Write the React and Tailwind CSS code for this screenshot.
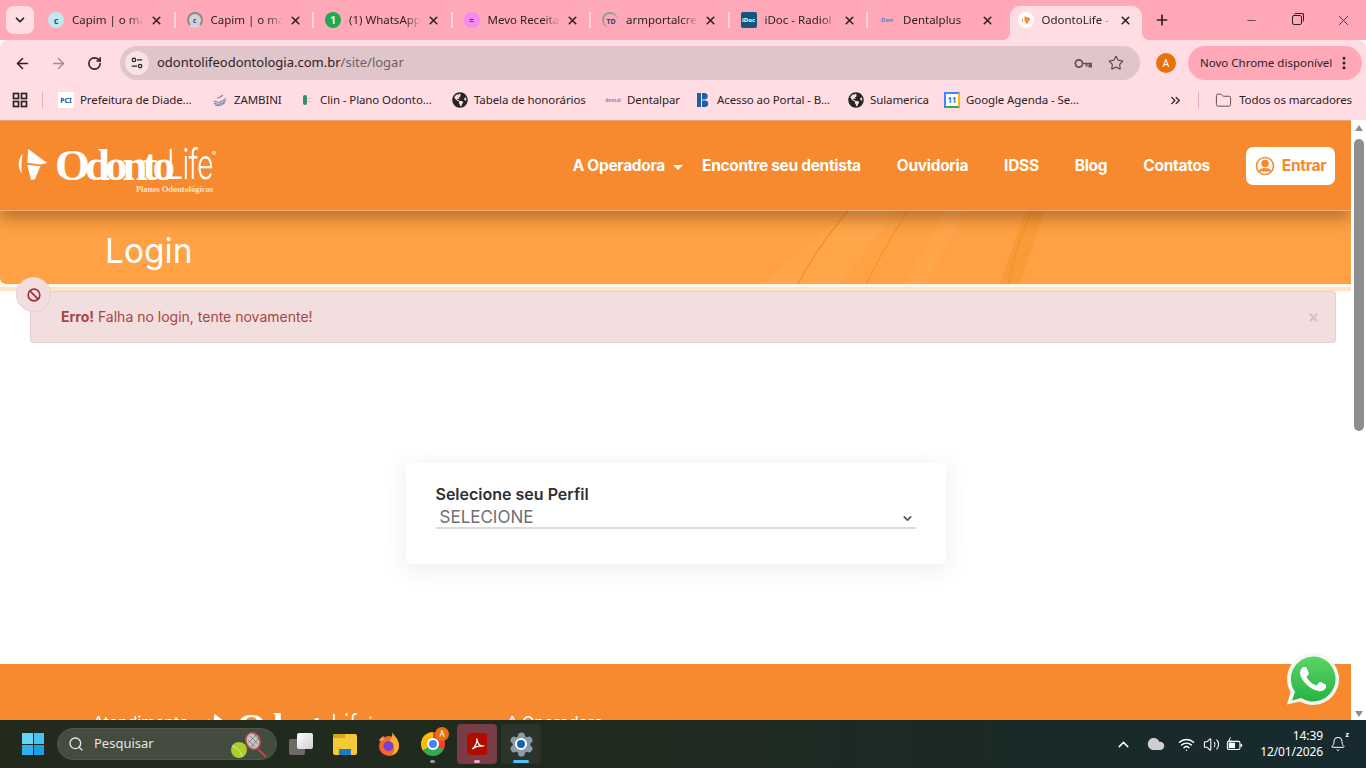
import { ArrowLeft, ArrowRight, RotateCw, Star, Folder, X, Plus, Minus, ChevronDown, ChevronUp, ChevronsRight, EllipsisVertical, Search, Wifi, Volume2, Cloud, Ban, Bell, Settings } from "lucide-react";
import { FaGlobeAmericas } from "react-icons/fa";

const uiFont = "font-['Noto_Sans',sans-serif]";

// favicons are tiny, so each one is only a rough drawing
const CapimIcon = () => (
  <div className="w-4 h-4 rounded-full bg-[#bfe9ee] flex items-center justify-center text-[9px] font-bold text-[#1c5a8a] leading-none">c</div>
);
const CapimLoadingIcon = () => (
  <div className="w-4 h-4 rounded-full border-2 border-[#8f8a8d] border-b-transparent flex items-center justify-center text-[7px] font-bold text-[#1c5a8a] leading-none bg-[#bfe9ee]/60">c</div>
);
const WhatsIcon = () => (
  <div className="w-4 h-4 rounded-full bg-[#1faa50] flex items-center justify-center text-[10px] font-bold text-white leading-none">1</div>
);
const MevoIcon = () => (
  <div className="w-4 h-4 rounded-full bg-[#f68af0] flex items-center justify-center text-[8px] font-bold text-[#6b1a55] leading-none">≈</div>
);
const TdIcon = () => (
  <div className="w-4 h-4 rounded-full border-l-2 border-t-2 border-[#9a9a9e] flex items-center justify-center text-[7px] font-bold text-[#2c4a6e] leading-none">TD</div>
);
const IdocIcon = () => (
  <div className="w-4 h-4 rounded-[2px] bg-[#12567f] flex items-center justify-center text-[6px] font-bold text-white leading-none">iDoc</div>
);
const DentalIcon = () => (
  <div className="w-4 h-4 flex items-center justify-center text-[6px] font-bold text-[#5b7fc0] leading-none">Den</div>
);
const OdontoIcon = () => (
  <div className="w-4 h-4 rounded-full bg-white flex items-center justify-center">
    <svg viewBox="0 0 16 16" className="w-3 h-3" fill="#f78a2e">
      <path d="M6 3l8 3-5 8-3-6z" />
      <path d="M3.500 5C2 8 2.500 10 4 12c-.3-2.500-.3-4.500-.5-7z" />
    </svg>
  </div>
);

const tabs = [
  { title: "Capim | o maior", icon: <CapimIcon /> },
  { title: "Capim | o maior", icon: <CapimLoadingIcon /> },
  { title: "(1) WhatsApp", icon: <WhatsIcon /> },
  { title: "Mevo Receita", icon: <MevoIcon /> },
  { title: "armportalcred", icon: <TdIcon /> },
  { title: "iDoc - Radiol", icon: <IdocIcon /> },
  { title: "Dentalplus", icon: <DentalIcon /> },
];

const PciIcon = () => (
  <div className="w-4 h-4 bg-white flex items-center justify-center text-[7px] font-bold text-[#1c4f9c] leading-none">PCI</div>
);
const ZambiniIcon = () => (
  <svg viewBox="0 0 16 16" className="w-4 h-4" fill="none" stroke="#7f8ea3" strokeWidth="1.200">
    <path d="M2 9c3 2 8 2 12-3M2 11c3 2 8 2 12-3M3 13c3 1 7 1 10-3M5 6c2 0 4-1 6-3" />
  </svg>
);
const ClinIcon = () => (
  <svg viewBox="0 0 16 16" className="w-4 h-4">
    <rect x="5" y="3" width="4" height="10" rx="2" fill="#2f8f6a" />
    <rect x="10" y="6" width="3" height="1" fill="#c8c8c8" />
    <rect x="10" y="9" width="3" height="1" fill="#c8c8c8" />
  </svg>
);
const GlobeIcon = () => <FaGlobeAmericas size={16} color="#262626" />;
const DentalparIcon = () => (
  <div className="w-4 h-4 flex items-center justify-center text-[5px] font-bold text-[#a87fb0] leading-none">dental</div>
);
const BlueBIcon = () => (
  <svg viewBox="0 0 16 16" className="w-4 h-4" fill="#1f5fa8">
    <rect x="2" y="1" width="4" height="14" />
    <path d="M7 1h3a3.300 3.300 0 010 6.500H7zM7 8.500h3.500a3.300 3.300 0 010 6.500H7z" />
  </svg>
);
const CalendarIcon = () => (
  <div className="w-4 h-4 bg-white border-2 border-[#4285f4] border-b-[#34a853] border-r-[#fbbc04] flex items-center justify-center text-[8px] font-bold text-[#1a73e8] leading-none">11</div>
);

const bookmarks = [
  { label: "Prefeitura de Diade...", icon: <PciIcon />, w: "w-[154px]" },
  { label: "ZAMBINI", icon: <ZambiniIcon />, w: "w-[86px]" },
  { label: "Clin - Plano Odonto...", icon: <ClinIcon />, w: "w-[154px]" },
  { label: "Tabela de honorários", icon: <GlobeIcon />, w: "w-[153px]" },
  { label: "Dentalpar", icon: <DentalparIcon />, w: "w-[90px]" },
  { label: "Acesso ao Portal - B...", icon: <BlueBIcon />, w: "w-[153px]" },
  { label: "Sulamerica", icon: <GlobeIcon />, w: "w-[96px]" },
  { label: "Google Agenda - Se...", icon: <CalendarIcon />, w: "w-[150px]" },
];

const navLinks = ["Encontre seu dentista", "Ouvidoria", "IDSS", "Blog", "Contatos"];

function TabStrip() {
  return (
    <div className={`h-10 bg-[#ffa9b8] flex relative ${uiFont}`}>
      <div className="absolute left-[6px] top-[6px] w-[28px] h-[28px] rounded-lg bg-[#ffdde3] flex items-center justify-center">
        <ChevronDown size={14} strokeWidth={3} color="#222" />
      </div>
      <div className="flex ml-[40px] h-full">
        {tabs.map((tab, i) => (
          <div key={i} className="w-[138.500px] h-10 flex items-center pl-[8px] relative">
            <div className="w-4 h-4 shrink-0">{tab.icon}</div>
            <span className="ml-[8px] w-[72px] overflow-hidden whitespace-nowrap text-[11.500px] text-[#2b2325] [mask-image:linear-gradient(90deg,#000_78%,transparent)]">{tab.title}</span>
            <X size={13} strokeWidth={3} color="#2b2325" className="ml-[6px] shrink-0" />
            {i < tabs.length - 1 && <div className="absolute right-[3px] top-[12px] w-[2px] h-[16px] bg-[#ffd5dc]" />}
          </div>
        ))}
        <div className="w-[132px] h-[34px] mt-[6px] pb-[6px] bg-[#ffdde3] rounded-t-[10px] flex items-center pl-[8px] relative">
          <div className="absolute -left-[8px] bottom-0 w-[8px] h-[8px] bg-[radial-gradient(circle_at_0_0,transparent_8px,#ffdde3_8px)]" />
          <div className="absolute -right-[8px] bottom-0 w-[8px] h-[8px] bg-[radial-gradient(circle_at_100%_0,transparent_8px,#ffdde3_8px)]" />
          <div className="w-4 h-4 shrink-0"><OdontoIcon /></div>
          <span className="ml-[8px] w-[69px] overflow-hidden whitespace-nowrap text-[11.500px] text-[#2b2325] [mask-image:linear-gradient(90deg,#000_85%,transparent)]">OdontoLife - Sistema</span>
          <X size={13} strokeWidth={3} color="#2b2325" className="ml-[8px] shrink-0" />
        </div>
        <Plus size={16} strokeWidth={2.500} color="#2b2325" className="ml-[12px] mt-[12px]" />
      </div>
      <div className="ml-auto flex items-center h-10 text-[#2b2325]">
        <div className="w-[46px] flex justify-center"><Minus size={13} strokeWidth={1.300} /></div>
        <div className="w-[46px] flex justify-center">
          <div className="w-[10px] h-[10px] rounded-[2px] border border-[#2b2325] relative">
            <div className="absolute left-[1px] -top-[3px] w-[10px] h-[9px] rounded-[2px] border-t border-r border-[#2b2325]" />
          </div>
        </div>
        <div className="w-[46px] flex justify-center"><X size={17} strokeWidth={1.100} /></div>
      </div>
    </div>
  );
}

function Toolbar() {
  return (
    <div className={`h-10 pt-[6px] bg-[#ffdde3] rounded-t-[8px] flex items-center relative ${uiFont}`}>
      <ArrowLeft size={17} strokeWidth={2.200} color="#2b2325" className="ml-[14px]" />
      <ArrowRight size={17} strokeWidth={2} color="#a18d92" className="ml-[19px]" />
      <RotateCw size={15} strokeWidth={2.500} color="#2b2325" className="ml-[20px]" />
      <div className="ml-[18px] w-[1020px] h-[34px] rounded-full bg-[#e0c5ca] flex items-center pl-[5px]">
        <div className="w-[24px] h-[24px] rounded-full bg-[#f6e3e6] flex items-center justify-center">
          <svg viewBox="0 0 16 16" className="w-[14px] h-[14px]" fill="none" stroke="#2b2325" strokeWidth="1.400">
            <circle cx="4.500" cy="4.500" r="2" />
            <path d="M8 4.500h6M2 11.500h6" />
            <circle cx="11.500" cy="11.500" r="2" />
          </svg>
        </div>
        <span className="ml-[8px] text-[13px] text-[#2b2325]">
          odontolifeodontologia.com.br<span className="text-[#6d5f63]">/site/logar</span>
        </span>
        <svg viewBox="0 0 20 12" className="ml-auto w-[18px] h-[11px]" fill="none" stroke="#5f5356" strokeWidth="1.900">
          <circle cx="5.500" cy="6" r="4" />
          <path d="M9.500 6H19v3.500h-2V7" />
          <path d="M14 6v3.500" />
        </svg>
        <Star size={16} strokeWidth={1.800} color="#5f5356" className="ml-[16px] mr-[16px]" />
      </div>
      <div className="ml-[16px] w-[20px] h-[20px] rounded-full bg-[#e8710a] flex items-center justify-center text-[10px] text-white">A</div>
      <div className="ml-[12px] w-[174px] h-[34px] rounded-full bg-[#ffa9b8] flex items-center pl-[12px] text-[11.500px] text-[#2b2325] whitespace-nowrap">
        Novo Chrome disponível
        <EllipsisVertical size={16} strokeWidth={2.500} className="ml-auto mr-[10px] shrink-0" />
      </div>
    </div>
  );
}

function BookmarksBar() {
  return (
    <div className={`h-10 bg-[#ffdde3] flex items-center text-[11.500px] tracking-[-0.1px] text-[#2b2325] whitespace-nowrap ${uiFont}`}>
      <svg viewBox="0 0 16 16" className="w-4 h-4 ml-[12px]" fill="none" stroke="#2b2325" strokeWidth="1.700">
        <rect x="1.500" y="1.500" width="5" height="5" />
        <rect x="9.500" y="1.500" width="5" height="5" />
        <rect x="1.500" y="9.500" width="5" height="5" />
        <rect x="9.500" y="9.500" width="5" height="5" />
      </svg>
      <div className="ml-[14px] mr-[15px] w-px h-[16px] bg-[#f2a9b6]" />
      <div className="flex items-center">
        {bookmarks.map((b) => (
          <div key={b.label} className={`${b.w} flex items-center`}>
            <div className="w-4 h-4 shrink-0">{b.icon}</div>
            <span className="ml-[6px]">{b.label}</span>
          </div>
        ))}
      </div>
      <ChevronsRight size={15} strokeWidth={2.200} className="ml-auto" />
      <div className="ml-[15px] mr-[16px] w-px h-[16px] bg-[#f2a9b6]" />
      <Folder size={17} strokeWidth={1.400} color="#5f5356" className="mr-[7px]" />
      <span className="mr-[14px]">Todos os marcadores</span>
    </div>
  );
}

function Logo() {
  return (
    <div className="relative w-[202px] h-[46px] text-white select-none">
      <svg viewBox="0 0 32 36" className="absolute left-0 top-0 w-[32px] h-[34px]" fill="#fff">
        <path d="M12 1l20 15-7 1.500-14-2z" />
        <path d="M11 18l14 1-6 14-4 1z" />
        <path d="M6 6C1 13 .500 19 5 27c-.500-7 0-14 1-21z" />
      </svg>
      <span className="absolute left-[39px] top-[-8px] font-['Liberation_Serif',serif] font-bold text-[45px] tracking-[-5px] leading-[50px]">Odonto</span>
      <span className="absolute left-[151px] top-[-9px] origin-left scale-x-[0.7] font-['Inter',sans-serif] font-light text-[41px] tracking-[-1px] leading-[50px]">Life</span>
      <span className="absolute left-[196px] top-[3px] text-[6px] leading-none">®</span>
      <span className="absolute left-[120px] top-[38px] font-['Liberation_Serif',serif] font-bold text-[8.400px] leading-none text-[#ffe1c4] whitespace-nowrap">Planos Odontológicos</span>
    </div>
  );
}

function Header() {
  return (
    <header className="h-[91px] bg-[#f78a2e] border-t border-[#e8a67a] border-b border-b-[#f2b27f] flex items-center pl-[16px] relative z-10 shadow-[0_8px_14px_rgba(90,50,10,0.4)] font-['Inter',sans-serif]">
      <div className="mt-[10px]"><Logo /></div>
      <nav className="ml-auto flex items-center text-white text-[15.500px] font-bold tracking-[-0.300px] whitespace-nowrap">
        <div className="flex items-center mr-[19px]">
          A Operadora
          <div className="ml-[8px] mt-[3px] w-0 h-0 border-x-[5px] border-x-transparent border-t-[5px] border-t-white" />
        </div>
        {navLinks.map((l) => (
          <span key={l} className="mr-[36px]">{l}</span>
        ))}
        <div className="w-[89px] h-[38px] rounded-[7px] bg-white flex items-center justify-center text-[#f78a2e] mr-[16px]">
          <svg viewBox="0 0 20 20" className="w-[20px] h-[20px] mr-[7px]" fill="none" stroke="#f78a2e" strokeWidth="1.600">
            <circle cx="10" cy="10" r="8.500" />
            <circle cx="10" cy="7.500" r="3" fill="#f78a2e" />
            <path d="M4.500 15.500c1-3.500 10-3.500 11 0" fill="#f78a2e" />
          </svg>
          Entrar
        </div>
      </nav>
    </header>
  );
}

function Banner() {
  return (
    <div className="relative h-[73px] bg-[#ffa144] overflow-hidden flex items-center pl-[105px] rounded-bl-[6px] font-['Inter',sans-serif]">
      <svg viewBox="0 0 1351 73" className="absolute inset-0 w-full h-full" preserveAspectRatio="none" fill="none">
        <path d="M760 73L850 0h45l-55 73z" fill="#ffa94f" opacity="0.6" />
        <path d="M905 73L945 0h20l-40 73z" fill="#ffa94f" opacity="0.6" />
        <path d="M1000 73L1025 0h20l-25 73z" fill="#f8932c" opacity="0.5" />
        <path d="M798 73C815 40 835 15 848 0" stroke="#f3901c" strokeWidth="1.200" />
        <path d="M866 73C880 45 895 20 908 0" stroke="#f3901c" strokeWidth="1" />
        <path d="M1008 73C1014 45 1022 20 1032 0" stroke="#f3901c" strokeWidth="1" />
      </svg>
      <h1 className="relative mt-[9px] text-white text-[33.500px] font-normal leading-none">Login</h1>
    </div>
  );
}

function ErrorAlert() {
  return (
    <div className="relative ml-[30px] mr-[15px] h-[52px] rounded-[3px] bg-[#f2dede] border border-[#e6d0d3] flex items-center pl-[30px] text-[14px] text-[#a94442] font-['Inter',sans-serif]">
      <div className="absolute -left-[15px] -top-[15px] w-[35px] h-[35px] rounded-full bg-[#f2dede] border border-[#e6d0d3] flex items-center justify-center">
        <Ban size={14} strokeWidth={2.800} color="#a02f3a" />
      </div>
      <span className="-mt-[2px]"><b className="font-bold">Erro!</b> Falha no login, tente novamente!</span>
      <X size={13} strokeWidth={3.500} color="#e4b9bf" className="absolute right-[15px] top-[19px]" />
    </div>
  );
}

function ProfileCard() {
  return (
    <div className="w-[540px] h-[101px] mx-auto mt-[120px] mb-[100px] rounded-[5px] bg-white shadow-[0_4px_22px_rgba(60,60,80,0.10)] pt-[21px] px-[30px] font-['Inter',sans-serif]">
      <div className="text-[16px] font-semibold text-[#2f2f33] leading-[20px]">Selecione seu Perfil</div>
      <div className="h-[25px] pt-[3px] border-b-2 border-[#dcdcdf] flex items-center pl-[4px] pr-[2px] text-[17px] text-[#6f6f74] leading-none">
        SELECIONE
        <ChevronDown size={13} strokeWidth={3} color="#55555a" className="ml-auto mt-[2px]" />
      </div>
    </div>
  );
}

function Footer() {
  return (
    <div className="h-[100px] bg-[#f78a2e] flex items-start text-white text-[16px] leading-none font-['Inter',sans-serif] pt-[50px] pl-[93px]">
      <span>Atendimento</span>
      <div className="ml-[15px] -mt-[1px] w-[166px] h-[40px]">
        <div className="origin-top-left scale-[0.84]"><Logo /></div>
      </div>
      <span className="ml-[137px]">A Operadora</span>
    </div>
  );
}

function ScrollBar() {
  return (
    <div className="w-[15px] shrink-0 bg-white flex flex-col items-center relative">
      <div className="mt-[5px] w-0 h-0 border-x-[4px] border-x-transparent border-b-[6px] border-b-[#8e8e8e]" />
      <div className="mt-[8px] w-[10px] h-[292px] rounded-full bg-[#8e8e8e]" />
      <div className="mt-auto mb-[3px] w-0 h-0 border-x-[4px] border-x-transparent border-t-[6px] border-t-[#8e8e8e]" />
    </div>
  );
}

function WhatsFloat() {
  return (
    <div className="absolute left-[1286px] top-[532px] w-[54px] h-[54px]">
      <svg viewBox="0 0 54 54" className="w-full h-full">
        <defs>
          <linearGradient id="wa" x1="0" y1="0" x2="0" y2="1">
            <stop offset="0" stopColor="#5bd466" />
            <stop offset="1" stopColor="#27b343" />
          </linearGradient>
        </defs>
        <path d="M27 1a26 26 0 11-13 48.500L1 52.500l3.500-12.500A26 26 0 0127 1z" fill="#f5f5f2" />
        <path d="M27 4.500a22.500 22.500 0 11-12 41.500l-9 2.500 3-8.500A22.500 22.500 0 0127 4.500z" fill="url(#wa)" />
        <path
          transform="translate(1 1) scale(2.170)"
          fill="#fff"
          d="M17.472 14.382c-.297-.149-1.758-.867-2.030-.967-.273-.099-.471-.148-.67.150-.197.297-.767.966-.940 1.164-.173.199-.347.223-.644.075-.297-.150-1.255-.463-2.390-1.475-.883-.788-1.480-1.761-1.653-2.059-.173-.297-.018-.458.130-.606.134-.133.298-.347.446-.520.149-.174.198-.298.298-.497.099-.198.050-.371-.025-.520-.075-.149-.669-1.612-.916-2.207-.242-.579-.487-.500-.669-.510-.173-.008-.371-.010-.570-.010-.198 0-.520.074-.792.372-.272.297-1.040 1.016-1.040 2.479 0 1.462 1.065 2.875 1.213 3.074.149.198 2.096 3.200 5.077 4.487.709.306 1.262.489 1.694.625.712.227 1.360.195 1.871.118.571-.085 1.758-.719 2.006-1.413.248-.694.248-1.289.173-1.413-.074-.124-.272-.198-.570-.347z"
        />
      </svg>
    </div>
  );
}

function WinLogo() {
  return (
    <div className="grid grid-cols-2 gap-px w-[22px] h-[22px]">
      <div className="bg-[#63d5f8]" />
      <div className="bg-[#45c3f5]" />
      <div className="bg-[#30b2ee]" />
      <div className="bg-[#1d9fe6]" />
    </div>
  );
}

function BatteryIcon() {
  return (
    <svg viewBox="0 0 20 16" className="ml-[6px] w-[18px] h-[15px]" fill="none" stroke="#fff" strokeWidth="1.200">
      <rect x="1.500" y="4.500" width="14" height="9" rx="1.500" />
      <rect x="3" y="6" width="7" height="6" fill="#fff" stroke="none" />
      <path d="M17 7.500v3" strokeWidth="1.800" />
      <path d="M5 0l-2 4h3l-1.500 3.500" strokeWidth="1" />
    </svg>
  );
}

function Taskbar() {
  return (
    <div className={`h-12 bg-[linear-gradient(90deg,#222a1c,#1f2a20_50%,#162a30)] flex items-center relative text-white ${uiFont}`}>
      <div className="ml-[22px]"><WinLogo /></div>
      <div className="ml-[13px] w-[220px] h-[32px] rounded-full bg-[#434c3f] border border-[#4e574a] flex items-center pl-[10px] relative">
        <Search size={16} strokeWidth={2} color="#e8e8e8" />
        <span className="ml-[10px] text-[13px] text-[#e4e4e4]">Pesquisar</span>
        <svg viewBox="0 0 38 26" className="absolute right-[8px] top-[3px] w-[38px] h-[26px]">
          <circle cx="9" cy="18" r="8" fill="#a8cf2b" />
          <path d="M2 14c4 1 9 5 10 11" fill="none" stroke="#eef5c0" strokeWidth="0.800" />
          <ellipse cx="23" cy="9" rx="7" ry="8.500" fill="#c4c4c4" stroke="#b94a4a" strokeWidth="1.600" transform="rotate(-22 23 9)" />
          <path d="M20 4l8 8M18 8l7 7M24 2l6 7M26 3l-8 8M29 6l-8 9" stroke="#555" strokeWidth="0.500" />
          <path d="M28 17l8 8" stroke="#b94a4a" strokeWidth="2" />
        </svg>
      </div>
      <div className="ml-[12px] relative w-[24px] h-[22px]">
        <div className="absolute left-0 bottom-0 w-[16px] h-[16px] bg-[#6a6a6a] rounded-[2px]" />
        <div className="absolute right-0 top-0 w-[16px] h-[16px] bg-[linear-gradient(135deg,#ffffff,#cfcfcf)] rounded-[2px]" />
      </div>
      <div className="ml-[20px] w-[24px] h-[21px] rounded-[2px] bg-[#f5c836] relative overflow-hidden">
        <div className="absolute left-0 top-0 w-[12px] h-[4px] bg-[#d9a520]" />
        <div className="absolute left-[6px] bottom-0 w-[12px] h-[6px] bg-[#1d7cc4]" />
      </div>
      <svg viewBox="0 0 24 24" className="ml-[20px] w-[24px] h-[24px]">
        <circle cx="12" cy="14" r="10" fill="#f4662a" />
        <path d="M15 0c1 3 7 6 7 14a10 10 0 01-8 9.800c5-4 4-11-2-15 2-1 4-4 3-8.800z" fill="#fbb034" />
        <path d="M2 9c1-3 3-4 5-5-1 3 0 4 2 4z" fill="#f9a33a" />
        <circle cx="11.500" cy="14" r="5" fill="#7b3ed0" />
      </svg>
      <div className="ml-[20px] relative w-[24px] h-[24px]">
        <div className="w-[24px] h-[24px] rounded-full bg-[conic-gradient(#ea4335_0_33%,#34a853_33%_66%,#fbbc04_66%_100%)] flex items-center justify-center">
          <div className="w-[12px] h-[12px] rounded-full bg-[#4285f4] border-2 border-white" />
        </div>
        <div className="absolute -right-[4px] -top-[5px] w-[14px] h-[14px] rounded-full bg-[#e8710a] text-[8px] flex items-center justify-center leading-none">A</div>
        <div className="absolute left-[9px] -bottom-[7px] w-[5px] h-[3px] rounded-full bg-[#9a9a9a]" />
      </div>
      <div className="ml-[12px] w-[40px] h-[40px] rounded-[4px] bg-[#7a3d47] flex items-center justify-center relative">
        <div className="w-[20px] h-[22px] rounded-[3px] bg-[#b30b00] flex items-center justify-center">
          <svg viewBox="0 0 20 20" className="w-[15px] h-[15px]" fill="none" stroke="#fff" strokeWidth="1.700">
            <path d="M9 2c1 5-2 11-6 14 4-3 9-5 14-4-3 1-7-3-8-10z" />
          </svg>
        </div>
        <div className="absolute bottom-[1px] left-[17px] w-[6px] h-[3px] rounded-full bg-[#f6a8b8]" />
      </div>
      <div className="ml-[4px] w-[40px] h-[40px] rounded-[4px] bg-[#2c342a] flex items-center justify-center relative">
        <Settings size={27} fill="#8a9aa8" color="#8a9aa8" strokeWidth={1.500} />
        <div className="absolute left-[14px] top-[14px] w-[12px] h-[12px] rounded-full bg-[#1563b0] border-2 border-white" />
        <div className="absolute bottom-[1px] left-[12px] w-[16px] h-[3px] rounded-full bg-[#4cc2ff]" />
      </div>

      <ChevronUp size={17} strokeWidth={2} className="ml-auto" />
      <Cloud size={18} fill="#cfcfcf" color="#cfcfcf" className="ml-[15px]" />
      <Wifi size={17} strokeWidth={2} className="ml-[13px]" />
      <Volume2 size={17} strokeWidth={1.500} className="ml-[8px]" />
      <BatteryIcon />
      <div className="ml-[16px] text-right text-[12px] leading-[16px] tracking-[-0.1px]">
        <div>14:39</div>
        <div>12/01/2026</div>
      </div>
      <div className="ml-[7px] mr-[20px] relative">
        <Bell size={16} strokeWidth={1.500} />
        <span className="absolute -right-[3px] -top-[5px] text-[7px] font-bold leading-none">z</span>
      </div>
    </div>
  );
}

export default function App() {
  return (
    <div className="w-[1366px] h-[768px] overflow-hidden flex flex-col bg-white">
      <TabStrip />
      <Toolbar />
      <BookmarksBar />
      <div className="h-[600px] flex relative overflow-hidden">
        <div className="flex-1 min-w-0 overflow-hidden">
          <Header />
          <Banner />
          <div className="h-[3px] bg-[#fff6ec]" />
          <div className="h-[4px] bg-[#ffe3c9]" />
          <ErrorAlert />
          <ProfileCard />
          <Footer />
        </div>
        <ScrollBar />
        <WhatsFloat />
      </div>
      <Taskbar />
    </div>
  );
}
